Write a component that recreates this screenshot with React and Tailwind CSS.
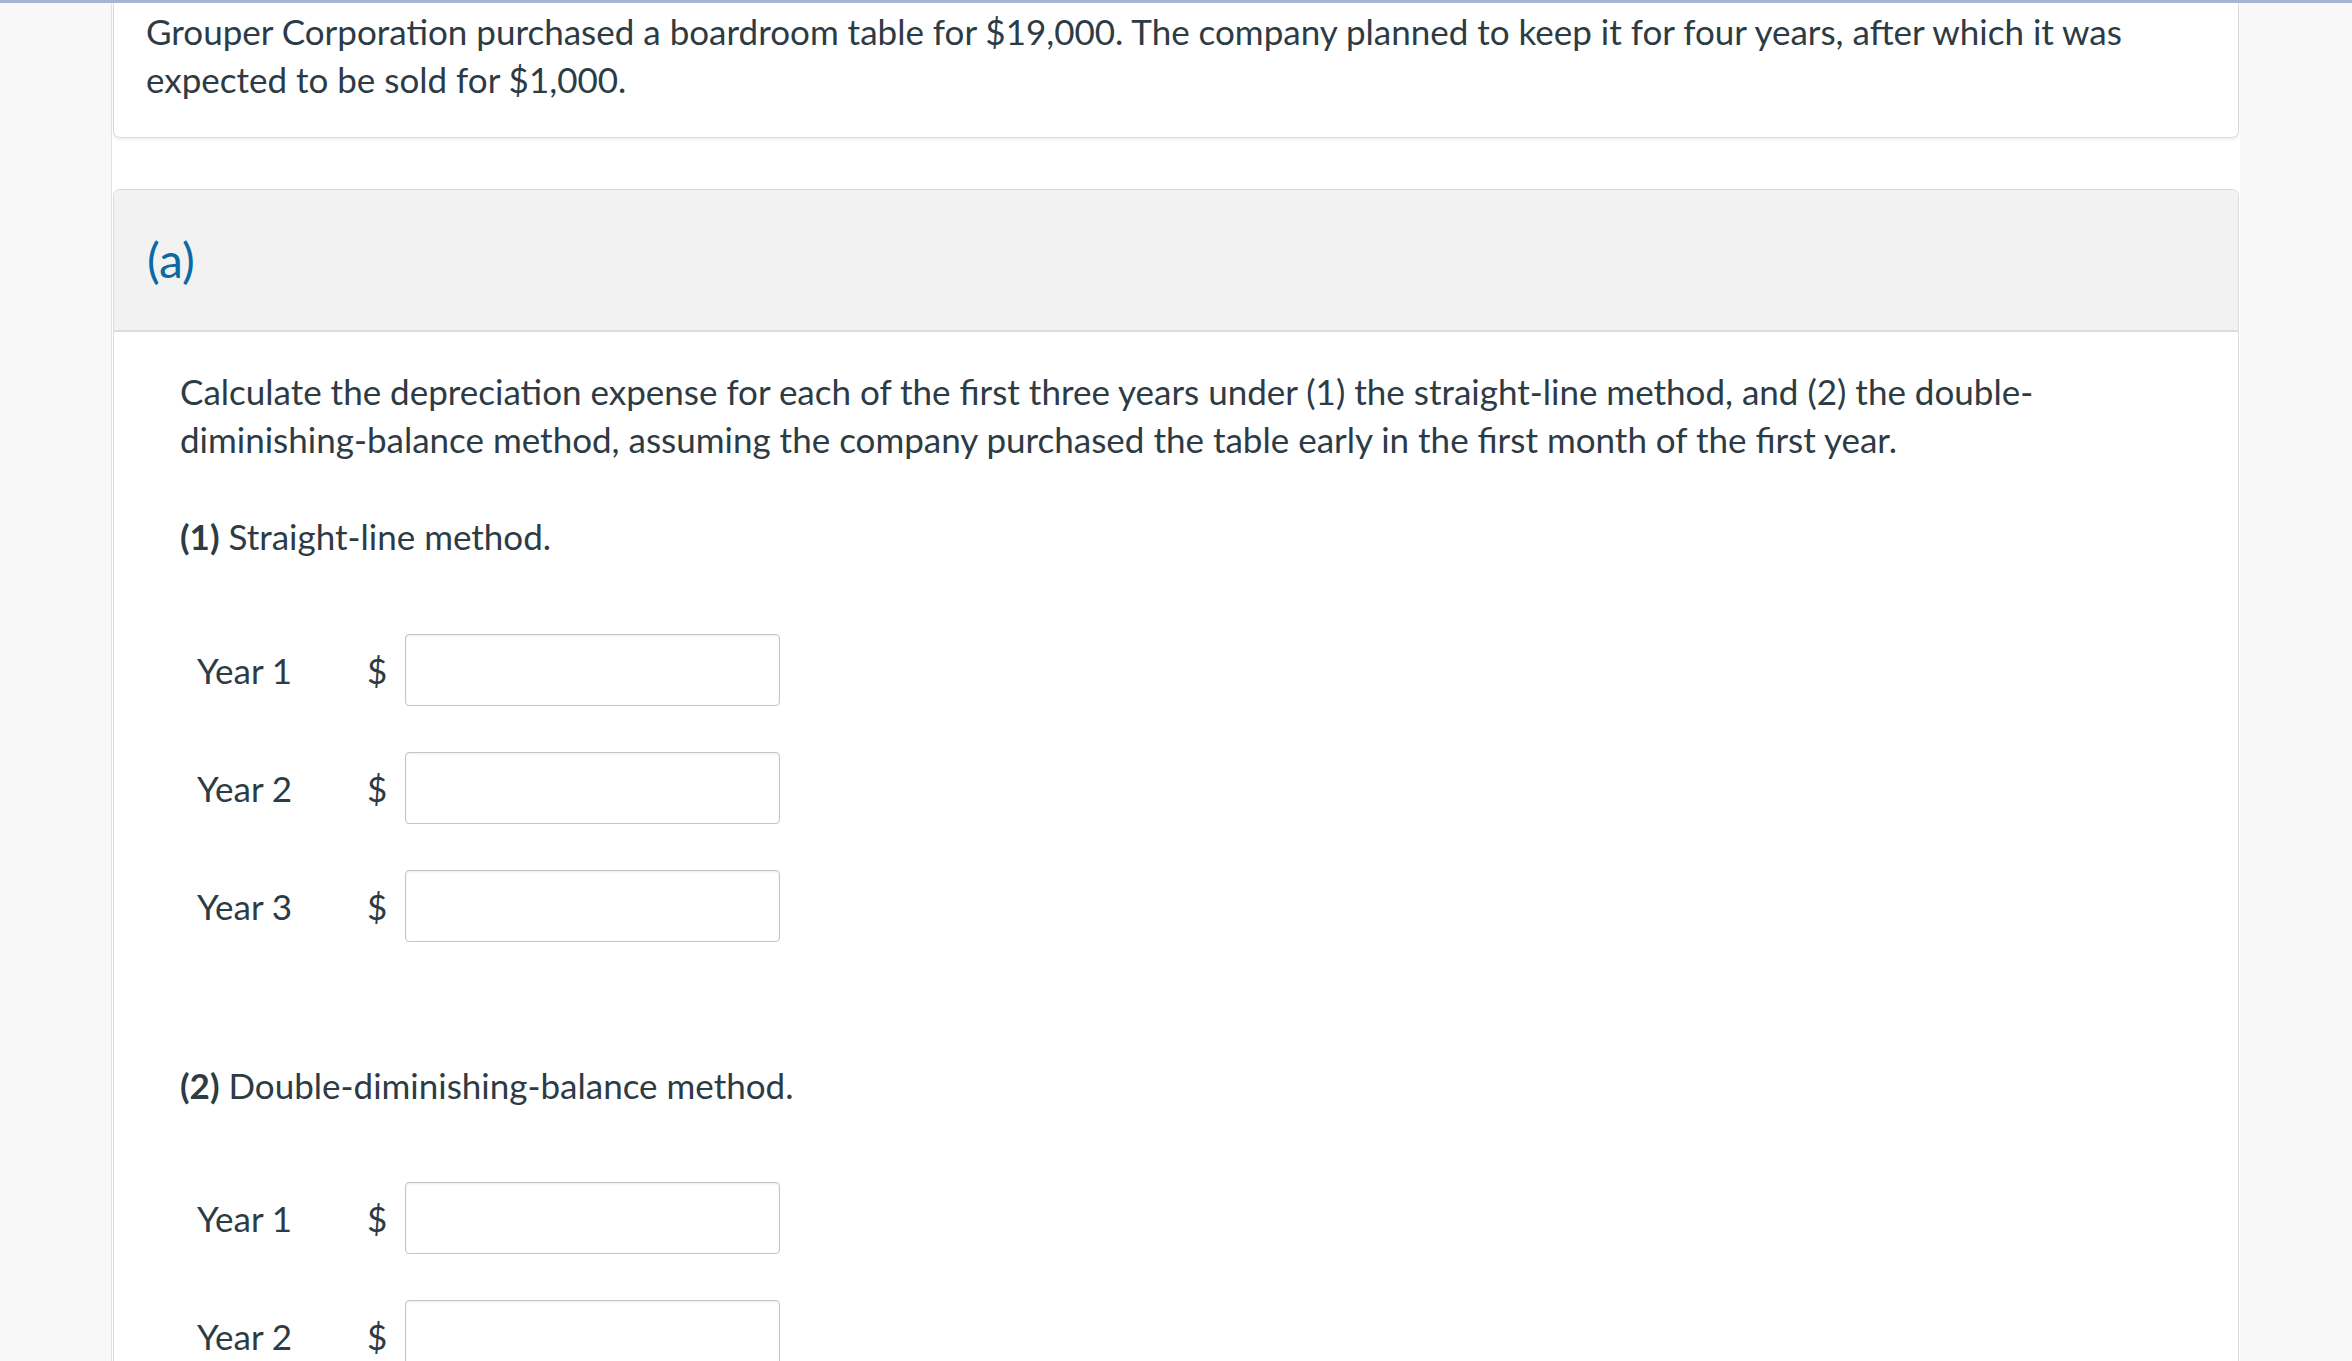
import React from "react";

const rowsOne = ["Year 1", "Year 2", "Year 3"];
const rowsTwo = ["Year 1", "Year 2", "Year 3"];

const AmountRow = ({ label }) => (
  <div className="flex items-center pl-[17px]">
    <span className="w-[170px]">{label}</span>
    <span className="w-[20px] text-center">$</span>
    <input
      type="text"
      className="ml-[18px] w-[375px] h-[72px] rounded-[4px] border border-[#c4c4c4] bg-white shadow-[inset_0_1px_2px_rgba(0,0,0,0.08)] outline-none"
    />
  </div>
);

export default function App() {
  return (
    <div
      className="min-h-screen bg-[#f8f8f8] border-t-[3px] border-[#a6b4d2] text-[#2d3b45] text-[35px] leading-[48px]"
      style={{ fontFamily: "Lato, 'Open Sans', sans-serif" }}
    >
      <div className="ml-[111px] w-[2129px] bg-white border-l border-[#e2e2e2] min-h-[1358px]">
        {/* problem statement */}
        <div className="ml-px w-[2126px] bg-white border border-t-0 border-[#dadada] rounded-b-[7px] shadow-[0_2px_3px_rgba(0,0,0,0.06)] pt-[4px] pb-[34px] pl-[32px] pr-[60px]">
          <p>
            Grouper Corporation purchased a boardroom table for $19,000. The company planned to keep it for four years, after which it was
            expected to be sold for $1,000.
          </p>
        </div>

        {/* part (a) */}
        <div className="ml-px mt-[51px] w-[2126px] border border-b-0 border-[#dadada] rounded-t-[7px] overflow-hidden">
          <div className="h-[142px] bg-[#f2f2f2] border-b-2 border-[#dcdcdc] flex items-center pl-[33px]">
            <h2 className="text-[48px] text-[#0b6aa5]">(a)</h2>
          </div>

          <div className="bg-white pt-[35px] pl-[66px] pr-[120px] pb-[40px]">
            <p>
              Calculate the depreciation expense for each of the first three years under (1) the straight-line method, and (2) the double-diminishing-balance method, assuming the company purchased the table early in the first month of the first year.
            </p>

            <p className="mt-[49px]">
              <span className="font-bold">(1)</span> Straight-line method.
            </p>

            <div className="mt-[74px] flex flex-col gap-[46px]">
              {rowsOne.map((r) => (
                <AmountRow key={"a" + r} label={r} />
              ))}
            </div>

            <p className="mt-[119px]">
              <span className="font-bold">(2)</span> Double-diminishing-balance method.
            </p>

            <div className="mt-[73px] flex flex-col gap-[46px]">
              {rowsTwo.map((r) => (
                <AmountRow key={"b" + r} label={r} />
              ))}
            </div>
          </div>
        </div>
      </div>
    </div>
  );
}
